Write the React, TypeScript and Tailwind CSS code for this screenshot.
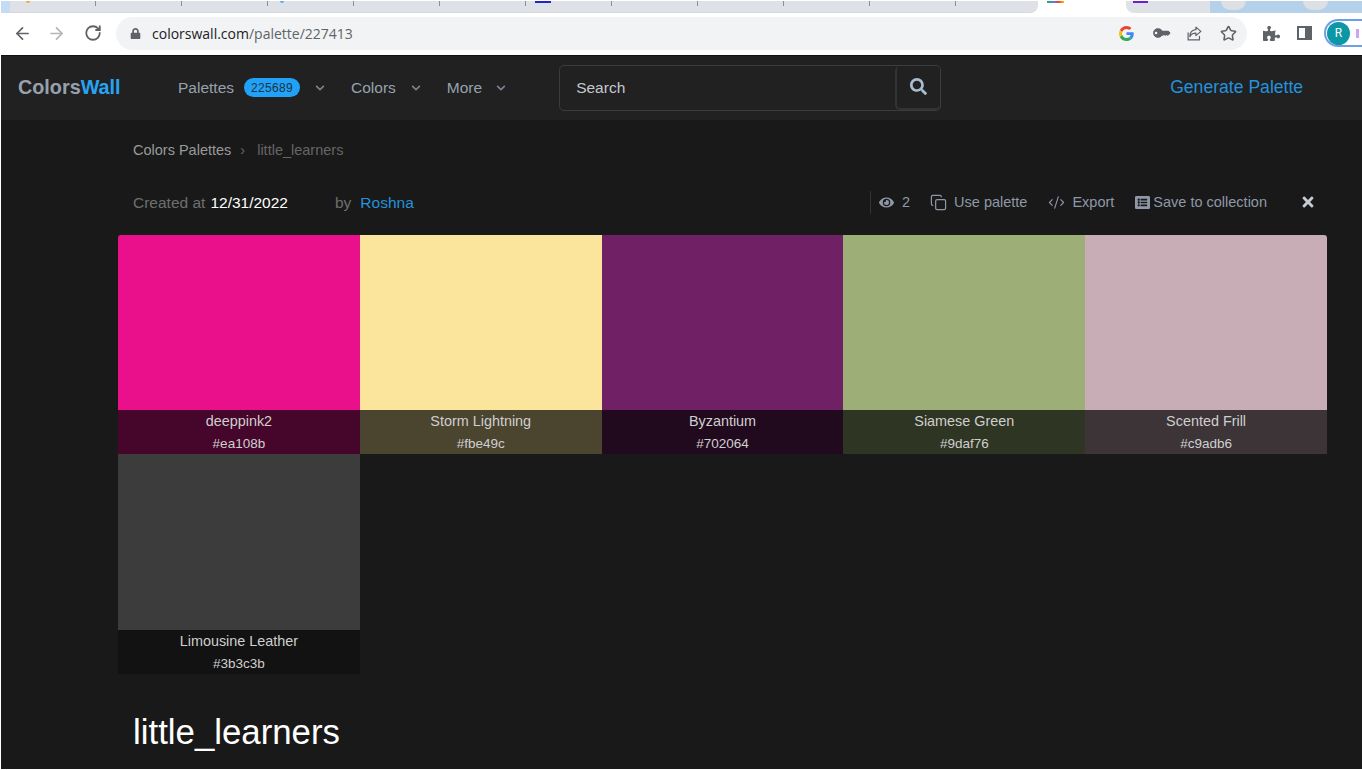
import React from 'react';
import { ArrowLeft, ArrowRight, CodeXml, Copy, RotateCw, Star } from 'lucide-react';
import { FaChevronDown, FaEye, FaKey, FaListAlt, FaLock, FaPuzzlePiece, FaSearch, FaTimes } from 'react-icons/fa';

const swatches = [
    { name: 'deeppink2', hex: '#ea108b', rounded: 'rounded-tl-[3px]' },
    { name: 'Storm Lightning', hex: '#fbe49c', rounded: '' },
    { name: 'Byzantium', hex: '#702064', rounded: '' },
    { name: 'Siamese Green', hex: '#9daf76', rounded: '' },
    { name: 'Scented Frill', hex: '#c9adb6', rounded: 'rounded-tr-[3px]' },
    { name: 'Limousine Leather', hex: '#3b3c3b', rounded: '' },
];

const tabMarks: Record<number, string> = {
    0: 'ml-[16px] h-[2px] w-[4px] rounded-b-full bg-[#f5a04a]',
    3: 'ml-[12px] h-[2px] w-[4px] rounded-b-full bg-[#6aa7e8]',
    6: 'ml-[9px] h-[2px] w-[16px] bg-[#2323c8]',
};

const TabStrip: React.FC = () => (
    <div className="flex h-[13px] bg-white pt-px">
        <div className="w-[9px] bg-[#c4dcf3]" />
        <div className="flex w-[1028px] rounded-br-lg border-b border-[#d5d8dc] bg-[#dee1e6]">
            {Array.from({ length: 11 }).map((_, i) => (
                <div key={i} className="h-[5px] w-[86px] border-r border-[#8a8d91]">
                    {tabMarks[i] && <div className={tabMarks[i]} />}
                </div>
            ))}
        </div>
        <div className="w-[88px] bg-white pl-[9px]">
            <div className="h-[2px] w-[17px] bg-[linear-gradient(90deg,#34a853,#4285f4,#ea4335,#fbbc05)]" />
        </div>
        <div className="w-[84px] rounded-bl-lg bg-[#dee1e6] pl-[7px]">
            <div className="h-[2px] w-[15px] bg-[#6a1fd0]" />
        </div>
        <div className="flex flex-1 gap-[57px] bg-[#b5d0ea] pl-[11px]">
            <div className="h-[9px] w-[25px] rounded-b-full bg-[#dcdfe3]" />
            <div className="h-[9px] w-[25px] rounded-b-full bg-[#dcdfe3]" />
        </div>
    </div>
);

const BrowserBar: React.FC = () => (
    <div className="flex h-[43px] items-center border-b border-[#111] bg-white pb-[2px] pl-[12px]">
        <ArrowLeft size={19} strokeWidth={2.2} className="text-[#5f6368]" />
        <ArrowRight size={19} strokeWidth={2.2} className="ml-[15px] text-[#b4b6b9]" />
        <RotateCw size={18} strokeWidth={2.4} className="ml-[18px] text-[#5f6368]" />
        <div className="ml-[14px] flex h-[33px] w-[1131px] shrink-0 items-center rounded-full bg-[#f1f3f4] pl-[14px] pr-[10px]">
            <FaLock size={11} className="text-[#5f6368]" />
            <span className="ml-[11px] font-['Open_Sans',sans-serif] text-[14px] text-[#5f6368]">
                <span className="text-[#202124]">colorswall.com</span>/palette/227413
            </span>
            <div className="ml-auto flex items-center">
                <svg width="15" height="15" viewBox="0 0 48 48">
                    <path fill="#EA4335" d="M24 9.5c3.5 0 6.7 1.2 9.2 3.6l6.9-6.9C35.9 2.4 30.5 0 24 0 14.6 0 6.5 5.4 2.6 13.2l8 6.2C12.5 13.6 17.8 9.5 24 9.5z" />
                    <path fill="#4285F4" d="M47 24.5c0-1.6-.1-3.1-.4-4.5H24v9h12.9c-.6 3-2.2 5.5-4.7 7.2l7.7 6c4.5-4.2 7.1-10.3 7.1-17.7z" />
                    <path fill="#FBBC05" d="M10.6 28.6A14.5 14.5 0 0 1 9.5 24c0-1.6.3-3.1 1.1-4.6l-8-6.2A24 24 0 0 0 0 24c0 3.9.9 7.5 2.6 10.8l8-6.2z" />
                    <path fill="#34A853" d="M24 48c6.5 0 11.9-2.1 15.9-5.8l-7.7-6c-2.2 1.4-4.9 2.3-8.2 2.3-6.2 0-11.5-4.1-13.4-9.9l-8 6.2C6.5 42.6 14.6 48 24 48z" />
                </svg>
                <FaKey size={14} className="ml-[20px] -scale-x-100 -rotate-45 text-[#5f6368]" />
                <svg className="ml-[18px] text-[#5f6368]" width="17" height="17" viewBox="0 0 24 24" fill="none" stroke="currentColor" strokeWidth="1.7" strokeLinejoin="round" strokeLinecap="round">
                    <path d="M3 11v10h16v-5" />
                    <path d="M14 3l7 6-7 6v-3.5c-4 0-7 1.5-8.5 5 0-5.5 3-9.5 8.5-10z" />
                </svg>
                <Star size={17} strokeWidth={2.2} className="ml-[17px] text-[#5f6368]" />
            </div>
        </div>
        <FaPuzzlePiece size={17} className="ml-[16px] text-[#5f6368]" />
        <div className="ml-[17px] flex h-[14px] w-[15px] justify-end border-2 border-[#5f6368]">
            <div className="w-[5px] bg-[#5f6368]" />
        </div>
        <div className="ml-[12px] flex h-[28px] flex-1 items-center rounded-l-full border-y-2 border-l-2 border-[#6e9ee6] pl-[1px]">
            <div className="flex h-[23px] w-[23px] items-center justify-center rounded-full bg-[#0b97a5] font-['Roboto',sans-serif] text-[12px] text-white">R</div>
            <div className="ml-[6px] h-[9px] w-[3px] bg-[#c9a6ef]" />
        </div>
    </div>
);

const SiteHeader: React.FC = () => (
    <header className="flex h-[64px] items-center bg-[#212121] pb-px pl-[17px] text-[15.5px] text-[#97a1ae]">
        <div className="w-[160px] text-[19.8px] font-bold">
            Colors<span className="text-[#27a3f3]">Wall</span>
        </div>
        <span>Palettes</span>
        <span className="ml-[10px] flex h-[19px] w-[56px] items-center justify-center rounded-full bg-[#1fa2f7] text-[12px] tracking-[0.3px] text-[#1f3140]">225689</span>
        <FaChevronDown size={10} className="ml-[15px] text-[#7b8490]" />
        <span className="ml-[26px]">Colors</span>
        <FaChevronDown size={10} className="ml-[15px] text-[#7b8490]" />
        <span className="ml-[26px]">More</span>
        <FaChevronDown size={10} className="ml-[14px] text-[#7b8490]" />
        <div className="ml-[53px] flex h-[46px] w-[382px] items-stretch rounded-[5px] border border-[#3c3c3c]">
            <div className="flex flex-1 items-center pl-[16px] text-[#c4c8cd]">Search</div>
            <div className="flex w-[45px] items-center justify-center rounded-[5px] border-2 border-r-0 border-t-0 border-[#333]">
                <FaSearch size={17} className="text-[#a9bccf]" />
            </div>
        </div>
        <a className="ml-[229px] text-[17.6px] text-[#2492dc]">Generate Palette</a>
    </header>
);

const Swatch: React.FC<{ name: string; hex: string; rounded: string }> = ({ name, hex, rounded }) => (
    <div>
        <div className={`h-[175.5px] ${rounded}`} style={{ backgroundColor: hex }} />
        <div className="h-[44px] text-center leading-[22px] text-[#cfcfcf]" style={{ backgroundColor: `color-mix(in srgb, ${hex} 30%, black)` }}>
            <div className="text-[14.4px]">{name}</div>
            <div className="pt-px text-[13.5px]">{hex}</div>
        </div>
    </div>
);

const App: React.FC = () => {
    return (
        <div className="h-[770px] overflow-hidden border-l border-white bg-white font-['Liberation_Sans',Arial,sans-serif]">
            <TabStrip />
            <BrowserBar />
            <SiteHeader />
            <main className="h-[649px] bg-[#191919] pl-[117px]">
                <div className="flex h-[60px] items-center pl-[15px] pt-[2px] text-[14.5px]">
                    <span className="text-[#999]">Colors Palettes</span>
                    <span className="ml-[9px] text-[#666]">›</span>
                    <span className="ml-[12px] text-[#666]">little_learners</span>
                </div>
                <div className="flex h-[54.75px] w-[1209px] items-center pb-[10px] pl-[15px] text-[15.5px] text-[#6f6f6f]">
                    <span>Created at</span>
                    <span className="ml-[5px] text-white">12/31/2022</span>
                    <span className="ml-[47px]">by</span>
                    <span className="ml-[9px] text-[#2492dc]">Roshna</span>
                    <div className="ml-auto flex items-center text-[14.5px] text-[#8f98a6]">
                        <div className="h-[23px] border-l border-[#333]" />
                        <FaEye size={15} className="ml-[8px]" />
                        <span className="ml-[8px]">2</span>
                        <Copy size={17} strokeWidth={1.7} className="ml-[20px]" />
                        <span className="ml-[7px]">Use palette</span>
                        <CodeXml size={17} strokeWidth={1.6} className="ml-[21px]" />
                        <span className="ml-[7px]">Export</span>
                        <FaListAlt size={15} className="ml-[21px]" />
                        <span className="ml-[3px]">Save to collection</span>
                        <FaTimes size={16} className="ml-[33px] mr-[11px] text-[#c6ccd4]" />
                    </div>
                </div>
                <div className="grid w-[1209px] grid-cols-5">
                    {swatches.map((s) => (
                        <Swatch key={s.hex} {...s} />
                    ))}
                </div>
                <h1 className="mt-[37px] pl-[15px] text-[34.8px] leading-[42px] text-white">little_learners</h1>
            </main>
        </div>
    );
};

export default App;
